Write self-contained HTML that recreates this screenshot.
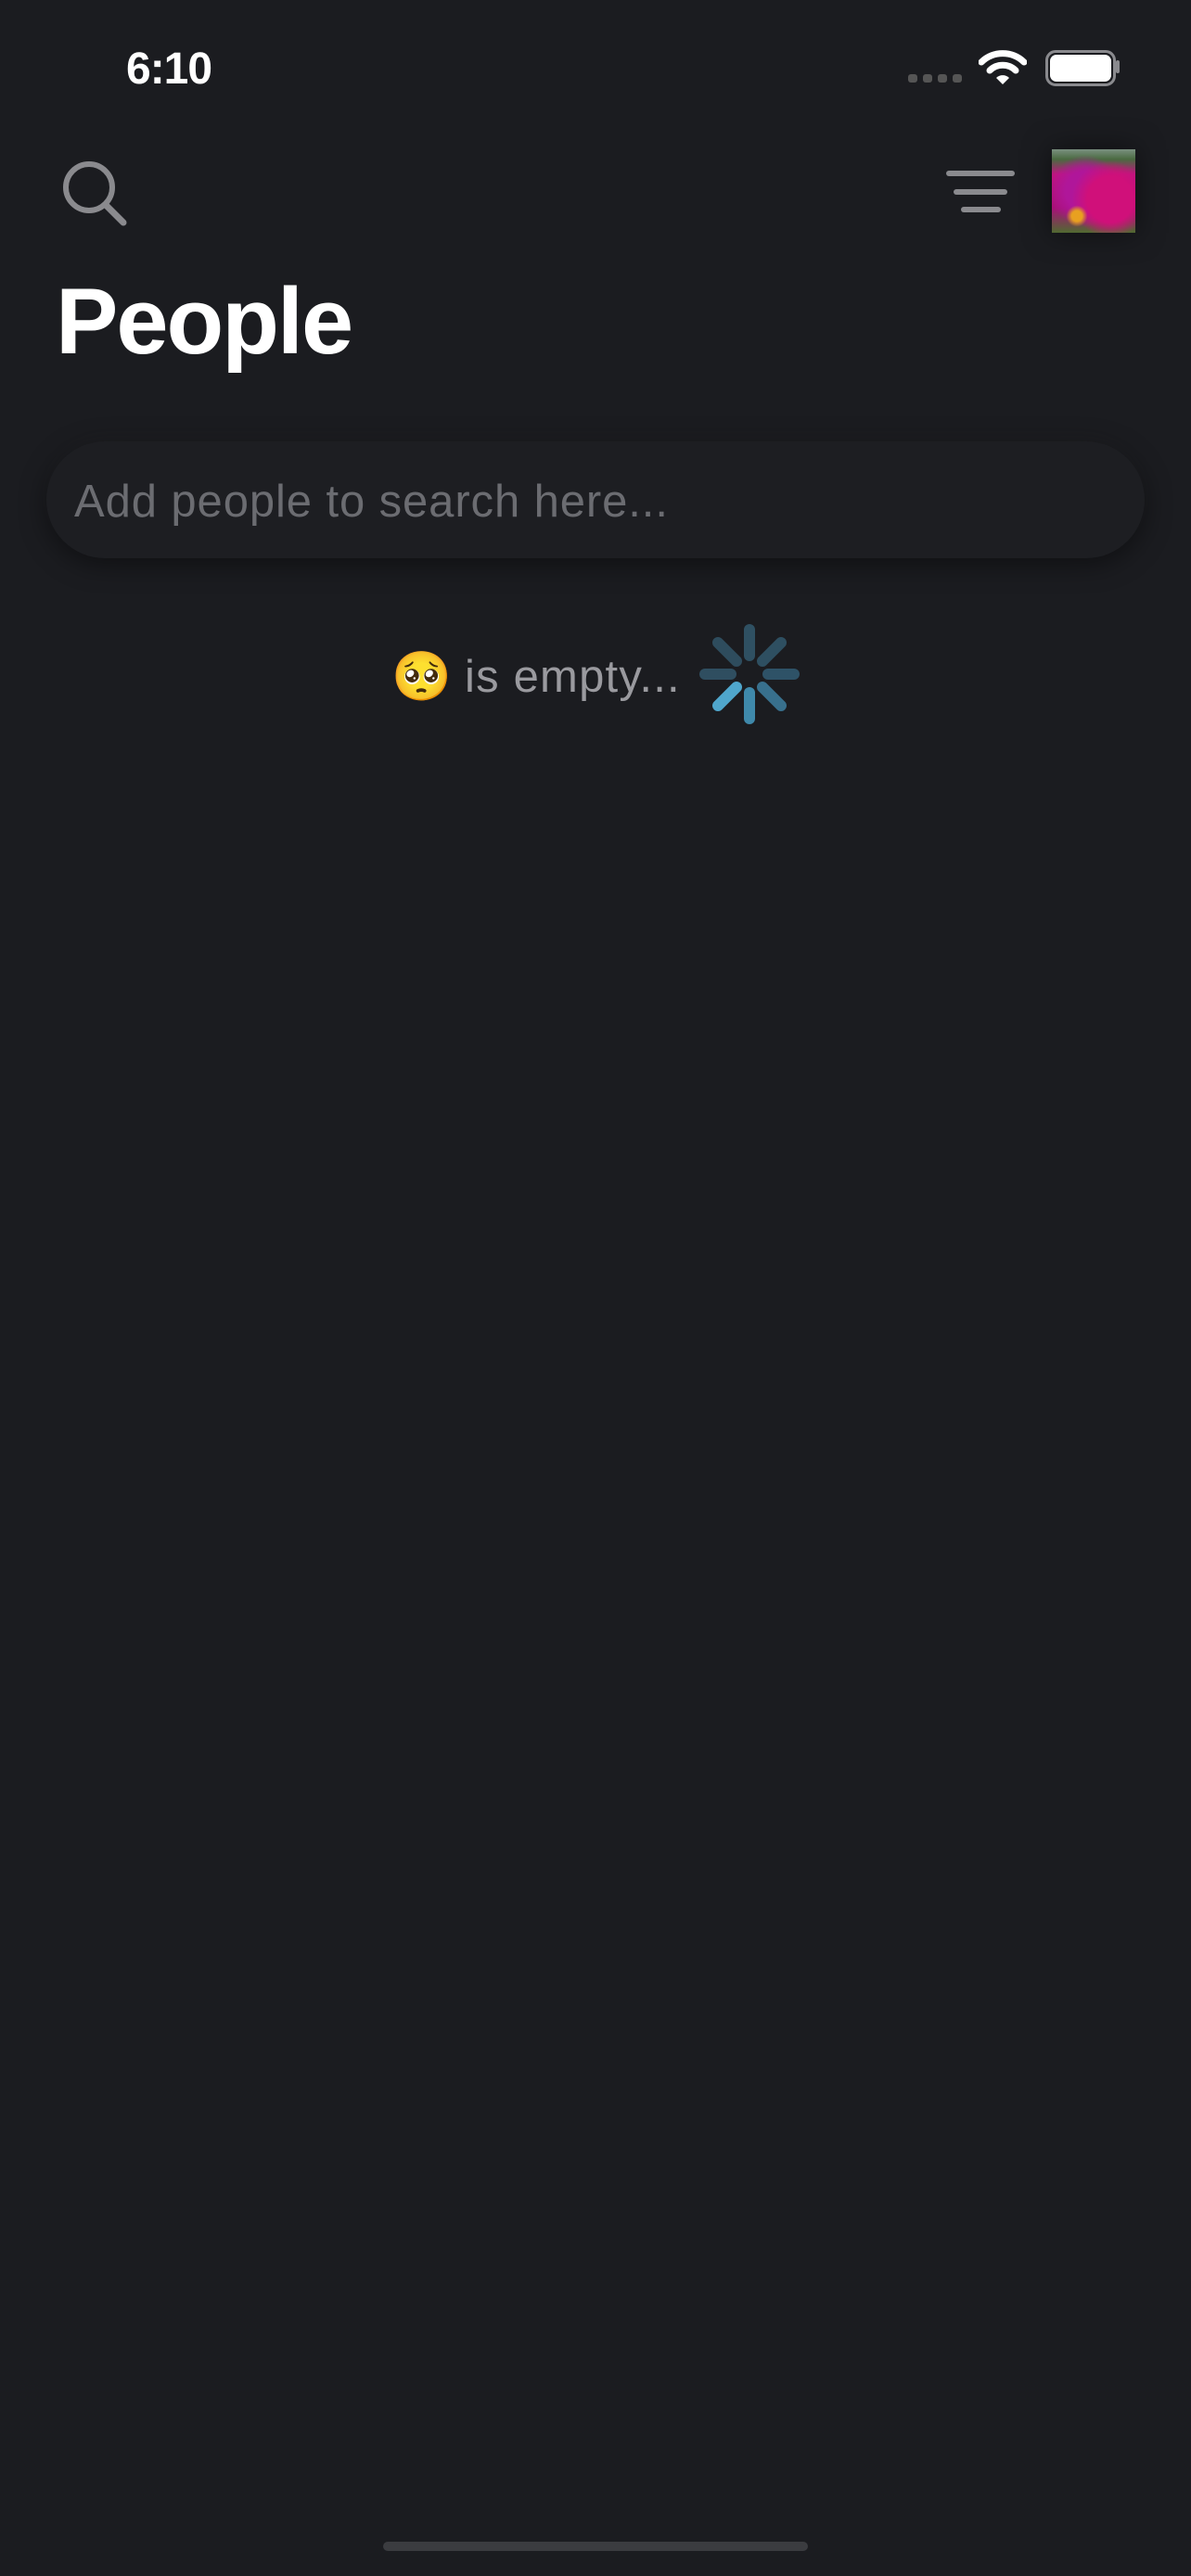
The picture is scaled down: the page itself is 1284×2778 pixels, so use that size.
<!DOCTYPE html>
<html><head><meta charset="utf-8"><style>
html,body{margin:0;padding:0;width:1284px;height:2778px;background:#1b1c20;overflow:hidden;font-family:"Liberation Sans",sans-serif;}
.a{position:absolute;}
</style></head><body>
<div class="a" style="left:136px;top:47px;font-size:48px;font-weight:bold;color:#fff;letter-spacing:-1px;">6:10</div>
<div class="a" style="left:979px;top:80px;width:10px;height:9px;border-radius:3px;background:#555;"></div>
<div class="a" style="left:995px;top:80px;width:10px;height:9px;border-radius:3px;background:#555;"></div>
<div class="a" style="left:1011px;top:80px;width:10px;height:9px;border-radius:3px;background:#555;"></div>
<div class="a" style="left:1027px;top:80px;width:10px;height:9px;border-radius:3px;background:#555;"></div>
<svg class="a" style="left:1055px;top:53px" width="52" height="38" viewBox="0 0 52 38"><path d="M3 14 A33 33 0 0 1 49 14" stroke="#fff" stroke-width="7" fill="none" stroke-linecap="round"/><path d="M12 23 A20 20 0 0 1 40 23" stroke="#fff" stroke-width="7" fill="none" stroke-linecap="round"/><path d="M19 31 L26 38 L33 31 A10 10 0 0 0 19 31Z" fill="#fff"/></svg>
<div class="a" style="left:1127px;top:54px;width:70px;height:33px;border:3px solid #8a8a8e;border-radius:11px;"></div>
<div class="a" style="left:1132px;top:59px;width:66px;height:29px;background:#fff;border-radius:7px;"></div>
<div class="a" style="left:1203px;top:65px;width:4px;height:14px;background:#8a8a8e;border-radius:2px;"></div>
<svg class="a" style="left:64px;top:170px" width="76" height="74" viewBox="0 0 76 74"><circle cx="32" cy="32" r="25" stroke="#8a8a8e" stroke-width="6" fill="none"/><path d="M50 51 L69 70" stroke="#8a8a8e" stroke-width="7" stroke-linecap="round"/></svg>
<div class="a" style="left:1020px;top:184px;width:74px;height:6px;border-radius:3px;background:#8a8a8e;"></div>
<div class="a" style="left:1028px;top:204px;width:58px;height:6px;border-radius:3px;background:#8a8a8e;"></div>
<div class="a" style="left:1036px;top:223px;width:43px;height:6px;border-radius:3px;background:#8a8a8e;"></div>
<div class="a" style="left:1134px;top:161px;width:90px;height:90px;box-shadow:0 0 30px rgba(0,0,0,.5);background:radial-gradient(circle at 30% 80%,#e8a020 0 6%,transparent 12%),radial-gradient(circle at 70% 60%,#d0107a 0 30%,transparent 50%),radial-gradient(circle at 40% 50%,#b0169a 0 30%,transparent 55%),linear-gradient(180deg,#7a9080 0%,#4a6a40 12%,#c01480 30%,#a81078 70%,#506a30 100%);"></div>
<div class="a" style="left:60px;top:290px;font-size:101px;font-weight:bold;color:#fff;letter-spacing:-2px;">People</div>
<div class="a" style="left:50px;top:476px;width:1184px;height:126px;border-radius:63px;background:#1d1e22;box-shadow:0 6px 30px rgba(0,0,0,.45),0 -6px 24px rgba(255,255,255,.025);"></div>
<div class="a" style="left:80px;top:513px;font-size:49px;color:#6b6c71;letter-spacing:0.9px;">Add people to search here...</div>
<div class="a" style="left:422px;top:700px;font-size:52px;line-height:60px;font-family:'Noto Color Emoji','DejaVu Sans',sans-serif;">🥺</div>
<div class="a" style="left:501px;top:702px;font-size:49px;color:#9a9a9f;letter-spacing:1.2px;">is empty...</div>
<svg class="a" style="left:748px;top:667px" width="120" height="120" viewBox="-60 -60 120 120">
<g stroke-width="12" stroke-linecap="round">
<line x1="0" y1="-20" x2="0" y2="-48" stroke="#2f5062"/>
<line x1="14" y1="-14" x2="34" y2="-34" stroke="#2e4f61"/>
<line x1="20" y1="0" x2="48" y2="0" stroke="#2e5267"/>
<line x1="14" y1="14" x2="34" y2="34" stroke="#38708d"/>
<line x1="0" y1="20" x2="0" y2="48" stroke="#3f89ab"/>
<line x1="-14" y1="14" x2="-34" y2="34" stroke="#4fa6cc"/>
<line x1="-20" y1="0" x2="-48" y2="0" stroke="#2f4e60"/>
<line x1="-14" y1="-14" x2="-34" y2="-34" stroke="#2e4c5d"/>
</g></svg>
<div class="a" style="left:413px;top:2741px;width:458px;height:10px;border-radius:5px;background:#3b3c40;"></div>
</body></html>
